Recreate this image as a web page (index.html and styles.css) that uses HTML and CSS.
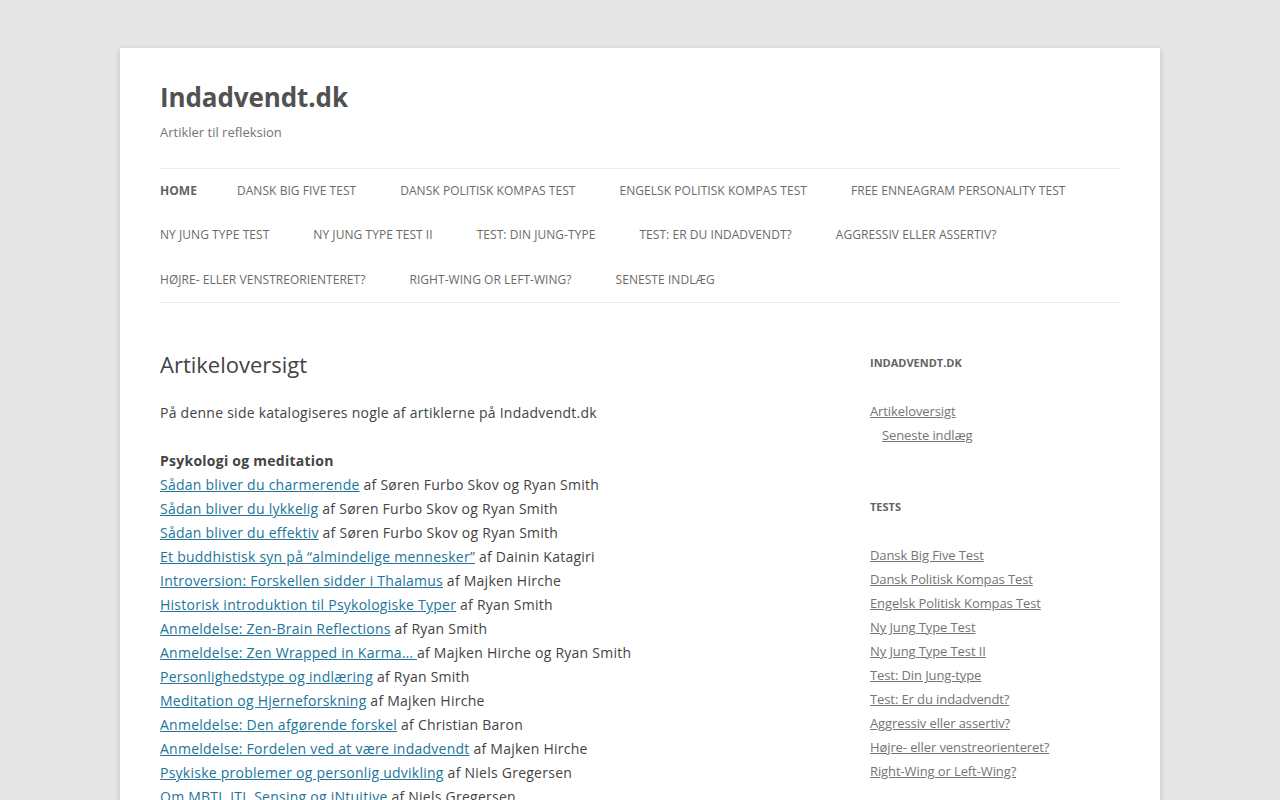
FILE: index.html
```
<!DOCTYPE html>
<html lang="da">
<head>
    <meta charset="UTF-8">
    <meta name="viewport" content="width=device-width, initial-scale=1.0">
    <title>Artikeloversigt | Indadvendt.dk</title>
    <link rel="stylesheet" href="styles.css">
</head>
<body>
    <div class="site">
        <header class="site-header">
            <h1 class="site-title"><a href="#">Indadvendt.dk</a></h1>
            <h2 class="site-description">Artikler til refleksion</h2>
            <nav class="main-navigation">
                <ul class="nav-menu">
                    <li class="current"><a href="#">Home</a></li>
                    <li><a href="#">Dansk Big Five Test</a></li>
                    <li><a href="#">Dansk Politisk Kompas Test</a></li>
                    <li><a href="#">Engelsk Politisk Kompas Test</a></li>
                    <li><a href="#">Free Enneagram Personality Test</a></li>
                    <li><a href="#">Ny Jung Type Test</a></li>
                    <li><a href="#">Ny Jung Type Test II</a></li>
                    <li><a href="#">Test: Din Jung-type</a></li>
                    <li><a href="#">Test: Er du indadvendt?</a></li>
                    <li><a href="#">Aggressiv eller assertiv?</a></li>
                    <li><a href="#">Højre- eller venstreorienteret?</a></li>
                    <li><a href="#">Right-Wing or Left-Wing?</a></li>
                    <li><a href="#">Seneste indlæg</a></li>
                </ul>
            </nav>
        </header>

        <div class="main">
            <div class="site-content">
                <article class="page">
                    <header class="entry-header">
                        <h1 class="entry-title">Artikeloversigt</h1>
                    </header>
                    <div class="entry-content">
                        <p>På denne side katalogiseres nogle af artiklerne på Indadvendt.dk</p>
                        <p><strong>Psykologi og meditation</strong><br>
                        <a href="#">Sådan bliver du charmerende</a> af Søren Furbo Skov og Ryan Smith<br>
                        <a href="#">Sådan bliver du lykkelig</a> af Søren Furbo Skov og Ryan Smith<br>
                        <a href="#">Sådan bliver du effektiv</a> af Søren Furbo Skov og Ryan Smith<br>
                        <a href="#">Et buddhistisk syn på “almindelige mennesker”</a> af Dainin Katagiri<br>
                        <a href="#">Introversion: Forskellen sidder i Thalamus</a> af Majken Hirche<br>
                        <a href="#">Historisk introduktion til Psykologiske Typer</a> af Ryan Smith<br>
                        <a href="#">Anmeldelse: Zen-Brain Reflections</a> af Ryan Smith<br>
                        <a href="#">Anmeldelse: Zen Wrapped in Karma… </a>af Majken Hirche og Ryan Smith<br>
                        <a href="#">Personlighedstype og indlæring</a> af Ryan Smith<br>
                        <a href="#">Meditation og Hjerneforskning</a> af Majken Hirche<br>
                        <a href="#">Anmeldelse: Den afgørende forskel</a> af Christian Baron<br>
                        <a href="#">Anmeldelse: Fordelen ved at være indadvendt</a> af Majken Hirche<br>
                        <a href="#">Psykiske problemer og personlig udvikling</a> af Niels Gregersen<br>
                        <a href="#">Om MBTI, JTI, Sensing og iNtuitive</a> af Niels Gregersen</p>
                    </div>
                </article>
            </div>

            <aside class="widget-area">
                <div class="widget">
                    <h3 class="widget-title">Indadvendt.dk</h3>
                    <ul>
                        <li><a href="#">Artikeloversigt</a>
                            <ul>
                                <li><a href="#">Seneste indlæg</a></li>
                            </ul>
                        </li>
                    </ul>
                </div>
                <div class="widget">
                    <h3 class="widget-title">Tests</h3>
                    <ul>
                        <li><a href="#">Dansk Big Five Test</a></li>
                        <li><a href="#">Dansk Politisk Kompas Test</a></li>
                        <li><a href="#">Engelsk Politisk Kompas Test</a></li>
                        <li><a href="#">Ny Jung Type Test</a></li>
                        <li><a href="#">Ny Jung Type Test II</a></li>
                        <li><a href="#">Test: Din Jung-type</a></li>
                        <li><a href="#">Test: Er du indadvendt?</a></li>
                        <li><a href="#">Aggressiv eller assertiv?</a></li>
                        <li><a href="#">Højre- eller venstreorienteret?</a></li>
                        <li><a href="#">Right-Wing or Left-Wing?</a></li>
                    </ul>
                </div>
            </aside>
        </div>
    </div>
</body>
</html>
```

FILE: styles.css
```
html, body {
    margin: 0;
    padding: 0;
}
body {
    font-family: "Open Sans", Helvetica, Arial, sans-serif;
    font-size: 14px;
    line-height: 1.714;
    background-color: #e6e6e6;
    color: #444;
}
ul {
    margin: 0;
    padding: 0;
    list-style: none;
}
h1, h2, h3, p {
    margin: 0;
}
a {
    color: #21759b;
}
.site {
    max-width: 960px;
    margin: 48px auto;
    padding: 0 40px;
    background-color: #fff;
    box-shadow: 0 2px 6px rgba(100, 100, 100, 0.3);
}
.site-header {
    padding: 24px 0;
}
.site-title {
    font-size: 26px;
    line-height: 48px;
    font-weight: bold;
    letter-spacing: -0.1px;
    padding-top: 1px;
    margin-bottom: -1px;
}
.site-title a {
    color: #515151;
    text-decoration: none;
}
.site-description {
    font-size: 13px;
    line-height: 24px;
    font-weight: normal;
    color: #757575;
}
.main-navigation {
    margin-top: 24px;
}
.nav-menu {
    display: flex;
    flex-wrap: wrap;
    border-top: 1px solid #ededed;
    border-bottom: 1px solid #ededed;
}
.nav-menu li {
    margin-right: 44px;
    font-size: 12px;
    letter-spacing: 0.05px;
}
.nav-menu li.current {
    margin-right: 40px;
}
.nav-menu li a {
    display: block;
    color: #6a6a6a;
    line-height: 3.692;
    text-transform: uppercase;
    text-decoration: none;
    white-space: nowrap;
}
.nav-menu li.current a {
    color: #636363;
    font-weight: bold;
}
.main {
    display: flex;
    justify-content: space-between;
    align-items: flex-start;
}
.site-content {
    width: 65.104%;
    margin-top: 24px;
}
.page {
    padding-bottom: 24px;
    margin-bottom: 72px;
}
.entry-header {
    margin-bottom: 24px;
}
.entry-title {
    font-size: 22px;
    line-height: 1.2;
    font-weight: normal;
}
.entry-content p {
    margin-bottom: 24px;
    line-height: 24px;
    letter-spacing: 0.25px;
}
.widget-area {
    width: 26.042%;
    margin-top: 24px;
}
.widget {
    margin-bottom: 48px;
    font-size: 13px;
    line-height: 24px;
}
.widget-title {
    font-size: 11px;
    line-height: 24px;
    font-weight: bold;
    text-transform: uppercase;
    color: #636363;
    margin-bottom: 24px;
}
.widget ul ul {
    margin-left: 12px;
}
.widget a {
    color: #757575;
    letter-spacing: -0.1px;
}
```
